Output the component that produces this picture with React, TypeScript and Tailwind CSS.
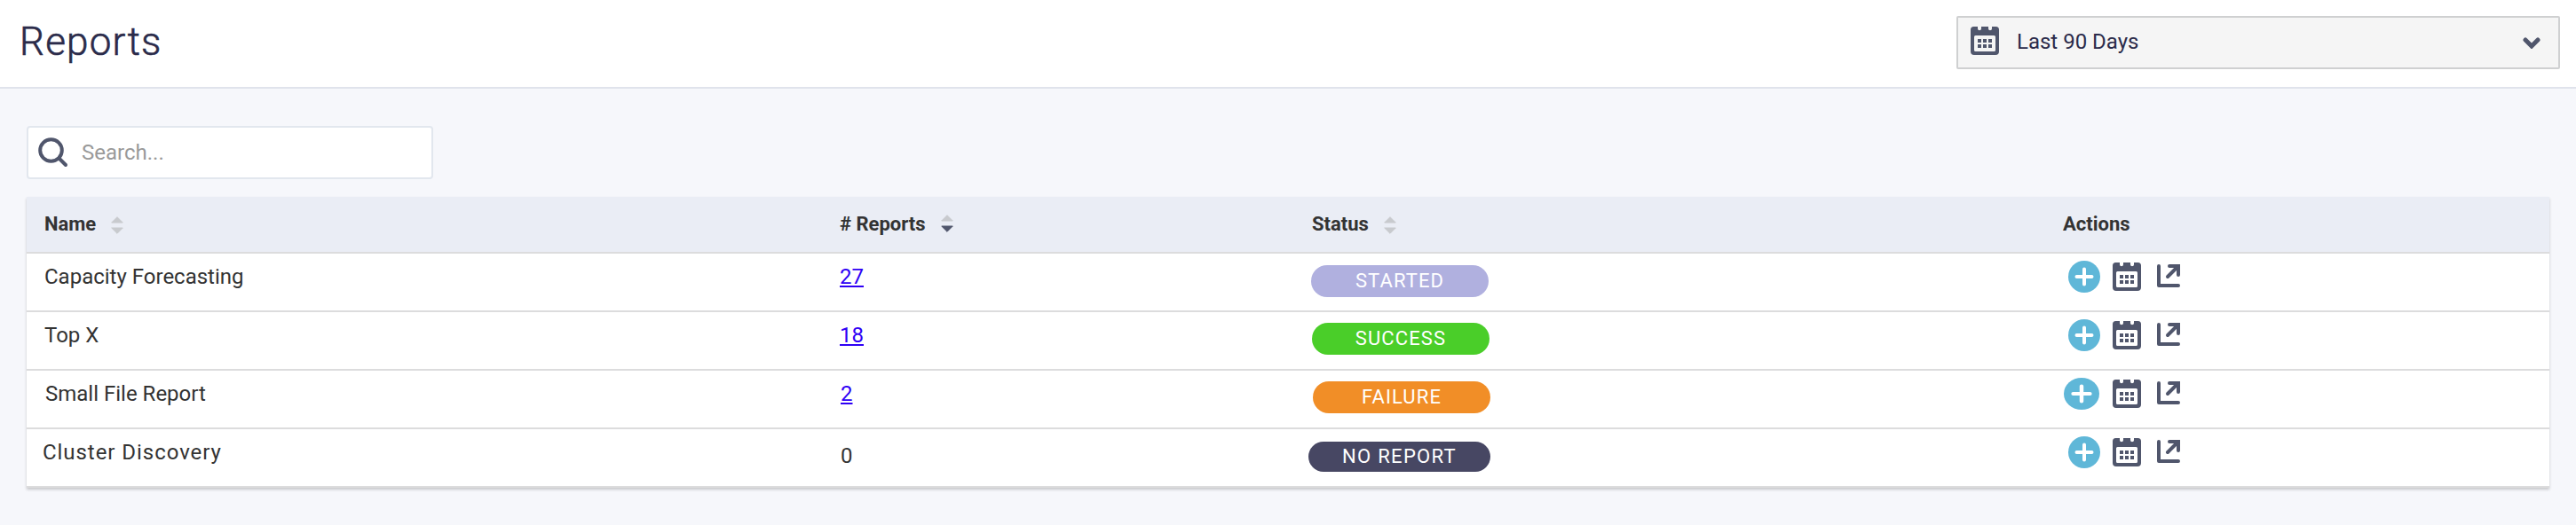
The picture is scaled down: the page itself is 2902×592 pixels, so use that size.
import React from 'react';
import clsx from 'clsx';

interface Report {
  name: string;
  nameClass: string;
  count: number;
  countClass: string;
  status: string;
  statusClass: string;
  plusClass: string;
}

const REPORTS: Report[] = [
  {
    name: 'Capacity Forecasting',
    nameClass: 'ml-5',
    count: 27,
    countClass: '',
    status: 'STARTED',
    statusClass: 'ml-[-1px] mt-[13px] h-9 w-[200px] bg-[#b0b0df] tracking-[1.1px]',
    plusClass: 'ml-1.5 mr-3.5 w-9',
  },
  {
    name: 'Top X',
    nameClass: 'ml-5',
    count: 18,
    countClass: '',
    status: 'SUCCESS',
    statusClass: 'mt-3 h-9 w-[200px] bg-[#4ace29] tracking-[1.1px]',
    plusClass: 'ml-1.5 mr-3.5 w-9',
  },
  {
    name: 'Small File Report',
    nameClass: 'ml-[21px]',
    count: 2,
    countClass: 'ml-px',
    status: 'FAILURE',
    statusClass: 'ml-px mt-3 h-9 w-[200px] bg-[#f18e27] tracking-[1.1px]',
    plusClass: 'ml-px mr-[15px] w-10',
  },
  {
    name: 'Cluster Discovery',
    nameClass: 'ml-[18px] tracking-[0.95px]',
    count: 0,
    countClass: 'ml-px mt-1',
    status: 'NO REPORT',
    statusClass: 'ml-[-4px] mt-3.5 h-[34px] w-[205px] bg-[#474763] tracking-[1.3px]',
    plusClass: 'ml-1.5 mr-3.5 w-9',
  },
];

const GRID = 'grid grid-cols-[916px_532px_846px_1fr]';

const CalendarIcon = () => (
  <svg viewBox="0 0 32 32" className="size-8 shrink-0" fill="#50566c">
    <path
      fillRule="evenodd"
      d="M3.5 0H8v2.2a2 2 0 0 0 4 0V0h8v2.2a2 2 0 0 0 4 0V0h4.500A3.500 3.500 0 0 1 32 3.500V28a4 4 0 0 1-4 4H4a4 4 0 0 1-4-4V3.500A3.500 3.500 0 0 1 3.500 0ZM5.500 10A1.500 1.500 0 0 0 4 11.500v15A1.500 1.500 0 0 0 5.500 28h21a1.500 1.500 0 0 0 1.500-1.500v-15A1.500 1.500 0 0 0 26.500 10Z"
    />
    <path d="M8 14h4v4H8zM14 14h4v4h-4zM20 14h4v4h-4zM8 20h4v4H8zM14 20h4v4h-4zM20 20h4v4h-4z" />
  </svg>
);

const PlusIcon = ({ className }: { className: string }) => (
  <svg viewBox="0 0 36 36" preserveAspectRatio="none" className={clsx('h-9 shrink-0', className)}>
    <circle cx="18" cy="18" r="18" fill="#5fb7d8" />
    <path d="M18 9.500v17M9.500 18h17" stroke="white" strokeWidth="4" strokeLinecap="round" />
  </svg>
);

const OpenIcon = () => (
  <svg viewBox="0 0 26 26" className="size-[26px] shrink-0" fill="none" stroke="#50566c" strokeWidth="4" strokeLinecap="round">
    <path d="M2 2v22h22" strokeLinejoin="round" />
    <path d="M14 2h10v10M12 14 23 3" />
  </svg>
);

const SortIcon = ({ active }: { active?: boolean }) => (
  <svg viewBox="0 0 14 20" className={clsx('h-5 w-3.5', active ? '-mt-0.5' : 'mt-0.5')} strokeWidth="1" strokeLinejoin="round">
    <path d="M7 .7 13.300 7H.7Z" fill="#c8cace" stroke="#c8cace" />
    <path d="M7 19.300 13.300 13H.7Z" fill={active ? '#50566c' : '#c8cace'} stroke={active ? '#50566c' : '#c8cace'} />
  </svg>
);

export default function App() {
  return (
    <div className="h-[592px] bg-[#f6f7fb] font-[Roboto,sans-serif] text-2xl text-[#333]">
      <header className="flex h-[100px] items-start justify-between border-b-2 border-[#e0e3ec] bg-white pl-[22px] pr-[18px]">
        <h1 className="mt-5 text-[44px] leading-[54px] font-light tracking-[1.2px] text-[#2b2b4a] [-webkit-text-stroke:0.6px_#2b2b4a]">Reports</h1>
        <button className="mt-[18px] flex h-[60px] w-[680px] items-center rounded-xs border-2 border-[#cfd0d1] bg-[#f5f5f5] pl-3.5 pr-5 text-[#2b2b4a]">
          <span className="-mt-1"><CalendarIcon /></span>
          <span className="ml-5 -mt-0.5">Last 90 Days</span>
          <svg viewBox="0 0 20 13" className="ml-auto h-[13px] w-5" fill="none" stroke="#50566c" strokeWidth="5" strokeLinecap="round">
            <path d="M3 3 10 10 17 3" />
          </svg>
        </button>
      </header>

      <main className="px-[30px] pt-[42px]">
        <div className="flex h-[60px] w-[458px] items-center rounded-sm border-2 border-[#e2e7ee] bg-white pl-[11px]">
          <svg viewBox="0 0 34 34" className="size-[34px]" fill="none" stroke="#50566c" strokeWidth="4" strokeLinecap="round">
            <circle cx="14.500" cy="14.500" r="12.300" />
            <path d="m24 24 7 7" />
          </svg>
          <input placeholder="Search..." className="ml-[15px] w-80 outline-none placeholder:text-[#9a9a9a]" />
        </div>

        <section className="mt-5 shadow-[0_2px_3px_rgba(0,0,0,0.2)]">
          <div className={clsx(GRID, 'h-16 border-b-2 border-[#dcdcdd] bg-[#eaedf5] text-[22px] leading-[62px] font-bold')}>
            <div className="flex items-center gap-[17px] pl-5">Name <SortIcon /></div>
            <div className="flex items-center gap-[17px]"># Reports <SortIcon active /></div>
            <div className="flex items-center gap-[17px]">Status <SortIcon /></div>
            <div>Actions</div>
          </div>
          {REPORTS.map((report) => (
            <div key={report.name} className={clsx(GRID, 'h-[66px] items-start border-b-2 border-[#dcdcdd] bg-white leading-[52px]')}>
              <div className={report.nameClass}>{report.name}</div>
              <div className={report.countClass}>
                {report.count > 0 ? (
                  <a className="text-[#2f00f5] underline decoration-2 underline-offset-2">{report.count}</a>
                ) : (
                  report.count
                )}
              </div>
              <div className={clsx('flex items-center justify-center rounded-full text-[22px] leading-none text-white', report.statusClass)}>
                {report.status}
              </div>
              <div className="flex h-[52px] items-center">
                <PlusIcon className={report.plusClass} />
                <CalendarIcon />
                <span className="ml-[18px] -mt-0.5"><OpenIcon /></span>
              </div>
            </div>
          ))}
        </section>
      </main>
    </div>
  );
}
